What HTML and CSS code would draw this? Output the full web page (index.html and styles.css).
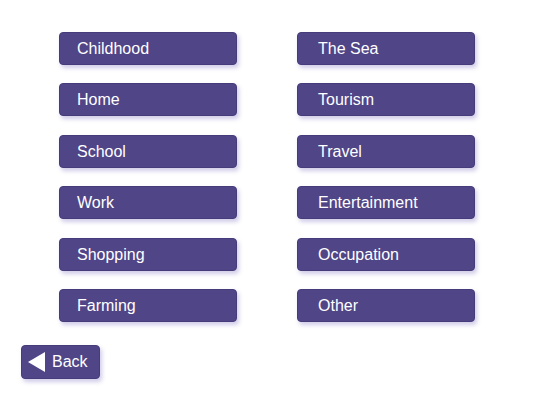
FILE: index.html
```html
<!DOCTYPE html>
<html>
<head>
<meta charset="utf-8">
<link rel="stylesheet" href="styles.css">
</head>
<body>
<div class="page">
  <div class="grid">
    <div class="btn">Childhood</div>
    <div class="btn right">The Sea</div>
    <div class="btn">Home</div>
    <div class="btn right">Tourism</div>
    <div class="btn">School</div>
    <div class="btn right">Travel</div>
    <div class="btn">Work</div>
    <div class="btn right">Entertainment</div>
    <div class="btn">Shopping</div>
    <div class="btn right">Occupation</div>
    <div class="btn">Farming</div>
    <div class="btn right">Other</div>
  </div>
  <div class="back">
    <svg class="tri" width="17" height="20" viewBox="0 0 17 20"><polygon points="0,10 17,0 17,20" fill="#ffffff"/></svg>
    <span>Back</span>
  </div>
</div>
</body>
</html>
```
FILE: styles.css
```css
html, body {
  margin: 0;
  padding: 0;
  background: #ffffff;
}
.page {
  width: 533px;
  height: 400px;
  padding: 32px 0 0 21px;
  box-sizing: border-box;
  font-family: "Liberation Sans", Arial, sans-serif;
}
.grid {
  display: grid;
  grid-template-columns: 178px 178px;
  grid-auto-rows: 33px;
  column-gap: 60px;
  row-gap: 18.4px;
  margin-left: 38px;
}
.btn {
  background: #4f4587;
  border: 1px solid #463c7b;
  border-radius: 4px;
  box-shadow: 2px 3px 4px rgba(120, 110, 190, 0.35);
  color: #ffffff;
  font-size: 16px;
  display: flex;
  align-items: center;
  padding: 1px 0 0 17px;
  box-sizing: border-box;
}
.btn.right {
  padding-left: 20px;
}
.back {
  margin-top: 23px;
  width: 79px;
  height: 34px;
  background: #4f4587;
  border: 1px solid #463c7b;
  border-radius: 4px;
  box-shadow: 2px 3px 4px rgba(120, 110, 190, 0.35);
  color: #ffffff;
  font-size: 16px;
  display: flex;
  align-items: center;
  padding: 1px 0 0 6px;
  gap: 7px;
  box-sizing: border-box;
}
.tri {
  display: block;
}
```
